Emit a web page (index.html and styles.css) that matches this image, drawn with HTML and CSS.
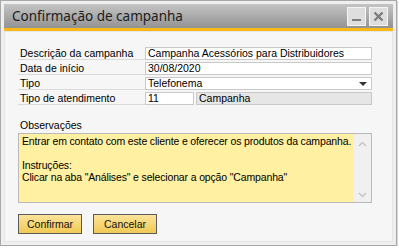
FILE: index.html
```html
<!DOCTYPE html>
<html>
<head>
<meta charset="utf-8">
<title>Confirmação de campanha</title>
<link rel="stylesheet" href="styles.css">
</head>
<body>
<div class="window">
  <div class="titlebar">
    <span class="title">Confirmação de campanha</span>
    <span class="tbtn">
      <svg width="13" height="13" viewBox="0 0 13 13"><rect x="2" y="9" width="9" height="2" fill="#7d7d7d"/></svg>
    </span>
    <span class="tbtn">
      <svg width="13" height="13" viewBox="0 0 13 13"><path d="M2.5 2.5 L10.5 10.5 M10.5 2.5 L2.5 10.5" stroke="#7d7d7d" stroke-width="2.4"/></svg>
    </span>
  </div>
  <div class="client">
    <div class="fields">
      <div class="lbl">Descrição da campanha</div>
      <div class="inp">Campanha Acessórios para Distribuidores</div>
      <div class="lbl">Data de início</div>
      <div class="inp">30/08/2020</div>
      <div class="lbl">Tipo</div>
      <div class="inp combo">Telefonema<span class="arrow"></span></div>
      <div class="lbl">Tipo de atendimento</div>
      <div class="pair">
        <div class="inp code">11</div>
        <div class="inp ro">Campanha</div>
      </div>
    </div>

    <div class="obs-label">Observações</div>
    <div class="memo">
      <div class="memo-text">Entrar em contato com este cliente e oferecer os produtos da campanha.<br><br>Instruções:<br>Clicar na aba "Análises" e selecionar a opção "Campanha"</div>
      <div class="scroll">
        <svg width="9" height="6" viewBox="0 0 9 6"><path d="M1 5 L4.5 1.5 L8 5" fill="none" stroke="#c4c4c4" stroke-width="1.4"/></svg>
        <svg width="9" height="6" viewBox="0 0 9 6"><path d="M1 1 L4.5 4.5 L8 1" fill="none" stroke="#c4c4c4" stroke-width="1.4"/></svg>
      </div>
    </div>

    <div class="buttons">
      <button class="btn">Confirmar</button>
      <button class="btn">Cancelar</button>
    </div>
  </div>
</div>
</body>
</html>
```
FILE: styles.css
```css
body {
  margin: 0;
  background: #ffffff;
  font-family: "Liberation Sans", Arial, sans-serif;
  font-size: 10.5px;
  color: #000;
}

.window {
  width: 389px;
  height: 238px;
  border: 1px solid #a8a8a8;
  background: #efefef;
  padding: 3px;
  display: flex;
  flex-direction: column;
  box-shadow: 1px 1px 0 #d8d8d8;
}

.titlebar {
  height: 24px;
  border-bottom: 3px solid #fbb917;
  background: linear-gradient(#c4c4c4, #939393);
  display: flex;
  align-items: center;
  gap: 3px;
  padding: 0 5px 0 8px;
}

.title {
  flex: 1;
  font-family: "Noto Sans", sans-serif;
  font-size: 13.5px;
  color: #1c1c1c;
  padding-bottom: 1px;
}

.tbtn {
  width: 17px;
  height: 17px;
  border: 1px solid #f4f4f4;
  background: #dedede;
  display: flex;
  align-items: center;
  justify-content: center;
  margin-top: 1px;
}

.client {
  flex: 1;
  background: #f6f6f6;
  border: 1px solid #e6e6e6;
  padding: 15px 20px 0 13px;
}

.fields {
  display: grid;
  grid-template-columns: 127px 1fr;
  row-gap: 2px;
}

.lbl {
  height: 12px;
  line-height: 12px;
  padding-left: 2px;
  border-bottom: 1px solid #dadada;
}

.inp {
  height: 11px;
  line-height: 11px;
  border: 1px solid #c9c9c9;
  background: #fff;
  padding: 0 2px;
  white-space: nowrap;
  overflow: hidden;
}

.combo {
  position: relative;
}

.arrow {
  position: absolute;
  right: 4px;
  top: 4px;
  border-left: 4px solid transparent;
  border-right: 4px solid transparent;
  border-top: 4px solid #333;
}

.pair {
  display: flex;
  gap: 2px;
}

.code {
  width: 43px;
}

.ro {
  flex: 1;
  background: #e6e6e6;
}

.obs-label {
  margin-top: 14px;
  padding-left: 2px;
  height: 14px;
}

.memo {
  height: 68px;
  border: 1px solid #b9b9b9;
  background: #fff0a2;
  display: flex;
}

.memo-text {
  flex: 1;
  padding: 1px 3px;
  line-height: 12px;
  white-space: nowrap;
  letter-spacing: -0.15px;
  overflow: hidden;
}

.scroll {
  width: 17px;
  background: #f0f0f0;
  display: flex;
  flex-direction: column;
  justify-content: space-between;
  align-items: center;
  padding: 7px 0 4px;
}

.buttons {
  display: flex;
  gap: 11px;
  margin-top: 11px;
}

.btn {
  width: 64px;
  height: 20px;
  border: 1px solid #5b5b5b;
  background: linear-gradient(#fbe39a, #f1ca54);
  font-family: "Liberation Sans", Arial, sans-serif;
  font-size: 10.5px;
  color: #111;
  padding: 0;
}
```
